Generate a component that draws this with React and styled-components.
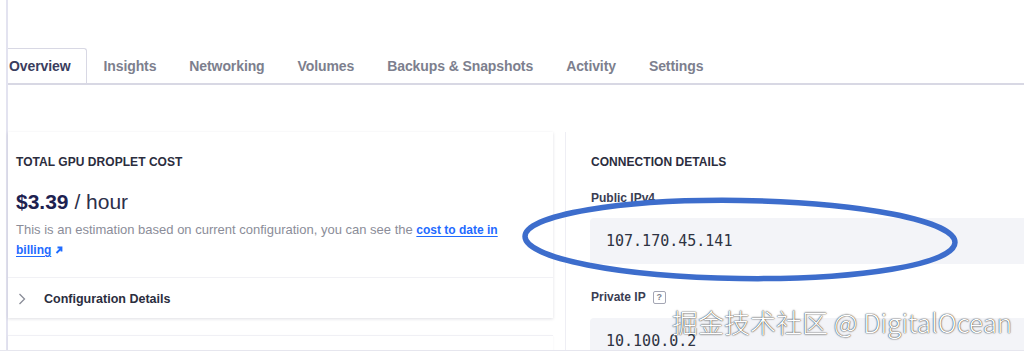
import React from "react";
import styled, { createGlobalStyle } from "styled-components";

const Global = createGlobalStyle`
  html, body { margin: 0; padding: 0; background: #fff; }
  body { font-family: "Liberation Sans", Arial, sans-serif; }
  * { box-sizing: border-box; }
`;

const Page = styled.div`
  position: relative;
  width: 1024px;
  height: 351px;
  overflow: hidden;
  background: #fff;
  border-bottom: 1px solid #e6e6ee;
`;

const Frame = styled.div`
  margin-left: 6px;
  height: 100%;
  border-left: 2px solid #e3e3f0;
  padding-top: 48px;
`;

const TabBar = styled.nav`
  display: flex;
  height: 37px;
  border-bottom: 2px solid #d8d8e4;
`;

const Tab = styled.div`
  display: flex;
  align-items: center;
  padding: 0 16px 0 ${(p) => (p.$first ? "1px" : "16px")};
  font-size: 14px;
  font-weight: 700;
  letter-spacing: -0.1px;
  white-space: nowrap;
  color: ${(p) => (p.$active ? "#3a3d5e" : "#7d7f8e")};
  background: #fff;
  border: ${(p) => (p.$active ? "1px solid #d8d8e4" : "1px solid transparent")};
  border-left: none;
  border-bottom: none;
  border-radius: 0 3px 0 0;
`;

const Content = styled.div`
  display: flex;
  gap: 12px;
  margin-top: 47px;
`;

const LeftColumn = styled.div`
  display: flex;
  flex-direction: column;
  gap: 17px;
  width: 545px;
  flex: none;
`;

const Card = styled.section`
  background: #fff;
  box-shadow: 0 1px 3px rgba(30, 30, 60, 0.14);
  height: ${(p) => p.$height || "auto"};
`;

const FaintCard = styled.section`
  height: 60px;
  background: #fff;
  border-top: 1px solid #f0f0f5;
  box-shadow: 0 1px 2px rgba(30, 30, 60, 0.06);
`;

const CardBody = styled.div`
  padding: 22px 16px 17px 8px;
`;

const Heading = styled.h3`
  margin: 0;
  font-size: 12px;
  line-height: 16px;
  font-weight: 700;
  color: #2b2d3e;
  text-transform: uppercase;
  letter-spacing: 0.05px;
`;

const Price = styled.div`
  margin-top: 20px;
  font-size: 21px;
  line-height: 24px;
  color: #2c2f4a;
`;

const Amount = styled.span`
  font-weight: 700;
  color: #1d2150;
`;

const Desc = styled.p`
  margin: 6px 0 0;
  max-width: 490px;
  font-size: 13px;
  line-height: 19px;
  color: #8b8d99;
`;

const Link = styled.a`
  color: #1f6bff;
  font-size: 12px;
  font-weight: 700;
  text-decoration: underline;
  text-underline-offset: 2px;
`;

const Arrow = styled.svg`
  width: 8px;
  height: 8px;
  margin-left: 4px;
`;

const Expander = styled.div`
  display: flex;
  align-items: center;
  gap: 18px;
  height: 43px;
  padding-left: 10px;
  border-top: 1px solid #f1f1f5;
  font-size: 12.5px;
  font-weight: 700;
  color: #2b2d3e;
`;

const Chevron = styled.svg`
  width: 8px;
  height: 12px;
`;

const RightPanel = styled.section`
  width: 620px;
  flex: none;
  border-left: 1px solid #eeeef4;
  padding: 22px 0 0 25px;
`;

const Label = styled.div`
  display: flex;
  align-items: center;
  gap: 7px;
  margin-top: ${(p) => p.$mt || "20px"};
  font-size: 12px;
  line-height: 16px;
  font-weight: 700;
  color: #3a3d52;
`;

const HelpBox = styled.span`
  display: inline-flex;
  align-items: center;
  justify-content: center;
  width: 13px;
  height: 13px;
  border: 1px solid #a4a6b4;
  border-radius: 2px;
  font-size: 9px;
  font-weight: 700;
  color: #7d7f8e;
`;

const ValueBox = styled.div`
  display: flex;
  align-items: center;
  height: 46px;
  margin-top: ${(p) => p.$mt || "12px"};
  margin-left: -1px;
  padding-left: 16px;
  background: #f3f4f8;
  border-radius: 4px;
  font-family: "DejaVu Sans Mono", "Liberation Mono", monospace;
  font-size: 15px;
  color: #2e3342;
`;

const Circle = styled.svg`
  position: absolute;
  left: 0;
  top: 0;
  width: 1024px;
  height: 351px;
  pointer-events: none;
`;

const Watermark = styled.div`
  position: absolute;
  left: 672px;
  top: 304px;
  font-family: "Noto Sans CJK SC", "Noto Sans", sans-serif;
  font-size: 26px;
  line-height: 35px;
  font-weight: 300;
  color: #fff;
  white-space: nowrap;
  text-shadow: 0 0 1px rgba(0, 0, 0, 0.9), 0 0 2px rgba(0, 0, 0, 0.5);
`;

const tabs = [
  "Overview",
  "Insights",
  "Networking",
  "Volumes",
  "Backups & Snapshots",
  "Activity",
  "Settings",
];

export default function App() {
  return (
    <Page>
      <Global />
      <Frame>
        <TabBar>
          {tabs.map((t, i) => (
            <Tab key={t} $active={i === 0} $first={i === 0}>
              {t}
            </Tab>
          ))}
        </TabBar>
        <Content>
          <LeftColumn>
            <Card $height="186px">
              <CardBody>
                <Heading>Total GPU Droplet Cost</Heading>
                <Price>
                  <Amount>$3.39</Amount> / hour
                </Price>
                <Desc>
                  This is an estimation based on current configuration, you can see the{" "}
                  <Link>cost to date in billing</Link>
                  <Arrow viewBox="0 0 8 8">
                    <path d="M1.5 7 L6 2.5 M2.5 1.5 H6.5 V5.5" stroke="#1f6bff" strokeWidth="1.8" fill="none" />
                  </Arrow>
                </Desc>
              </CardBody>
              <Expander>
                <Chevron viewBox="0 0 8 12">
                  <path d="M1.5 1 L6.5 6 L1.5 11" stroke="#8a8c98" strokeWidth="1.3" fill="none" />
                </Chevron>
                Configuration Details
              </Expander>
            </Card>
            <FaintCard />
          </LeftColumn>
          <RightPanel>
            <Heading>Connection Details</Heading>
            <Label>Public IPv4</Label>
            <ValueBox>107.170.45.141</ValueBox>
            <Label $mt="25px">
              Private IP <HelpBox>?</HelpBox>
            </Label>
            <ValueBox $mt="13px">10.100.0.2</ValueBox>
          </RightPanel>
        </Content>
      </Frame>
      <Circle viewBox="0 0 1024 351">
        <ellipse
          cx="740"
          cy="239.5"
          rx="215"
          ry="39"
          transform="rotate(0.8 740 239.5)"
          fill="none"
          stroke="#3d6dcc"
          strokeWidth="5.5"
        />
      </Circle>
      <Watermark>掘金技术社区 @ DigitalOcean</Watermark>
    </Page>
  );
}
